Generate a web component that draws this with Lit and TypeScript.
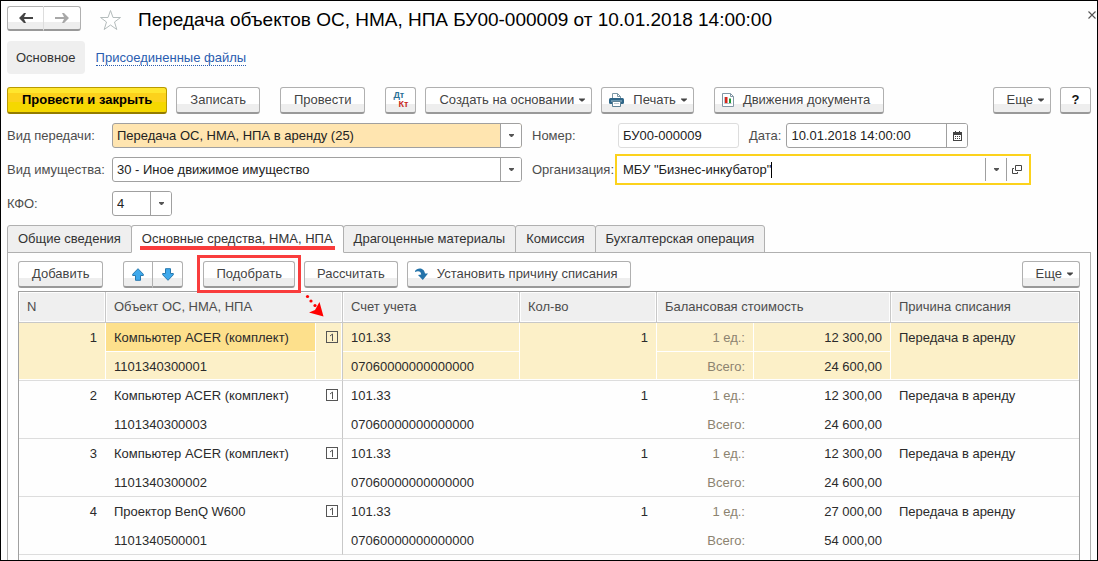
import { LitElement, html, svg, css, nothing } from "lit";
import { customElement, state } from "lit/decorators.js";
import { classMap } from "lit/directives/class-map.js";

interface AssetRow {
  name: string;
  inventory: string;
  account: string;
  subAccount: string;
  qty: number;
  unit: string;
  total: string;
  reason: string;
}

const ROWS: AssetRow[] = [
  ["Компьютер ACER (комплект)", "1101340300001", "12 300,00", "24 600,00"],
  ["Компьютер ACER (комплект)", "1101340300003", "12 300,00", "24 600,00"],
  ["Компьютер ACER (комплект)", "1101340300002", "12 300,00", "24 600,00"],
  ["Проектор BenQ W600", "1101340500001", "27 000,00", "54 000,00"],
].map(([name, inventory, unit, total]) => ({
  name,
  inventory,
  account: "101.33",
  subAccount: "07060000000000000",
  qty: 1,
  unit,
  total,
  reason: "Передача в аренду",
}));

const TABS = [
  "Общие сведения",
  "Основные средства, НМА, НПА",
  "Драгоценные материалы",
  "Комиссия",
  "Бухгалтерская операция",
];

const icon = (w: number, h: number, body: unknown) =>
  html`<svg class="icon" width=${w} height=${h} viewBox="0 0 ${w} ${h}" aria-hidden="true">${body}</svg>`;

const caretDown = () => icon(6, 4, svg`<path d="M0 .5h6v.7L3.600 3.500H2.400L0 1.200z" fill="#444"/>`);
const smallCaret = () => icon(5, 3, svg`<path d="M0 0h5v1L3 3H2L0 1z" fill="#555"/>`);
const arrowLeft = () =>
  icon(14, 10, svg`<path d="M0 5 5 0h2L5 4h9v2H5l2 4H5z" fill="#444"/>`);
const arrowRight = () =>
  icon(14, 10, svg`<path d="M14 5 9 0H7l2 4H0v2h9l-2 4h2z" fill="#a8a8a8"/>`);
const star = () =>
  icon(
    23,
    22,
    svg`<path d="M11.500 1.500 14 8.500h7.500l-6 4.500 2.300 7.500-6.300-4.500-6.300 4.500L7.500 13l-6-4.500H9z" fill="#fff" stroke="#b4bcbc"/>`,
  );
const closeIcon = () =>
  icon(8, 8, svg`<path d="M.5.5l7 7M7.500.5l-7 7" stroke="#555" stroke-width="1.100"/>`);
const printer = () =>
  icon(
    15,
    14,
    svg`<path d="M3.500 5V.5h5l3 3V5" fill="#fff" stroke="#7c98a6"/><path d="M8.500.5v3h3" fill="none" stroke="#7c98a6"/>
      <rect x="0" y="5" width="15" height="6" rx="1.500" fill="#2f6688"/><path d="M2 8h11" stroke="#9fc2d6"/>
      <path d="M3.500 8.500h8v5h-8z" fill="#fff" stroke="#5f8296"/><path d="M5 10.500h5" stroke="#b8c8d0"/>`,
  );
const chartDoc = () =>
  icon(
    12,
    14,
    svg`<path d="M.5.5h8l3 3v10H.5z" fill="#fff" stroke="#8296a4"/><path d="M8.500.5v3h3" fill="none" stroke="#8296a4"/>
      <path d="M2.500 4v6.500h7" fill="none" stroke="#b4c0c8"/><path d="M3 4h2.500v6H3z" fill="#d8261c"/><path d="M7 5.500h2V10H7z" fill="#1f9b3a"/>`,
  );
const blueArrow = () =>
  svg`<path d="M6 .7 11.300 6.200v1.300H8.500v4.800h-5V7.500H.7V6.200z" fill="#3fa9ec" stroke="#2778ae"/>`;
const moveUp = () => icon(12, 13, blueArrow());
const moveDown = () => icon(12, 13, svg`<g transform="rotate(180 6 6.500)">${blueArrow()}</g>`);
const applyIcon = () =>
  icon(
    13,
    13,
    svg`<path d="M0 3C2-.5 9-1 10 5.500h3L7.800 12 3 7l3.200-.6C6 3.500 3.500 2.200 0 4z" fill="#2473aa"/>`,
  );
const calendar = () =>
  icon(
    9,
    10,
    svg`<path d="M0 1h9v9H0z" fill="#444"/><path d="M2 0h1v2H2zM6 0h1v2H6z" fill="#444"/><path d="M1 4h7v5H1z" fill="#fff"/>
      <path d="M2 5.500h5M2 7.500h5" stroke="#444" stroke-dasharray="1 1"/>`,
  );
const openIcon = () =>
  icon(
    10,
    9,
    svg`<path d="M3.500.5h6v5h-6z" fill="none" stroke="#444"/><path d="M2 3.500H.5v5h5V7" fill="none" stroke="#444"/>`,
  );
const subcontoIcon = () =>
  html`<svg class="icon" width="12" height="12" viewBox="0 0 12 12" role="img" aria-label="1">
    <rect x=".5" y=".5" width="11" height="11" fill="none" stroke="#555"></rect>
    <path d="M4 5l2.500-2v7" fill="none" stroke="#555"></path>
  </svg>`;

@customElement("app-root")
export class AppRoot extends LitElement {
  @state() private activeTab = 1;
  @state() private selected = 0;

  static styles = css`
    :host {
      display: block;
      font: 13px/16px "Liberation Sans", Arial, sans-serif;
      color: #333;
    }
    * {
      box-sizing: border-box;
    }
    button,
    input,
    select {
      font: inherit;
      color: inherit;
      margin: 0;
    }
    .icon {
      display: block;
      flex: none;
    }
    .window {
      display: flex;
      flex-direction: column;
      height: 100vh;
      overflow: hidden;
      border: 1px solid #000;
      background: #fefefe;
    }
    .head {
      display: flex;
      align-items: center;
      height: 35px;
      padding: 0 0 0 6px;
    }
    .title {
      flex: 1;
      margin: 2px 0 0 16px;
      font-size: 19px;
      line-height: 24px;
      font-weight: 400;
      color: #000;
      white-space: nowrap;
    }
    .star {
      margin: 2px 0 0 18px;
      padding: 0;
      border: 0;
      background: none;
    }
    .close {
      align-self: flex-start;
      padding: 10px 1px 4px;
      border: 0;
      background: none;
    }
    .split {
      display: flex;
    }
    .split .btn:first-child {
      border-radius: 3px 0 0 3px;
    }
    .split .btn:last-child {
      border-radius: 0 3px 3px 0;
      border-left: 0;
    }
    .history .btn {
      width: 37px;
      height: 25px;
    }
    .history .btn:first-child {
      border-right-color: #ddd;
    }
    .order .btn {
      width: 30px;
    }
    .btn {
      display: flex;
      align-items: center;
      justify-content: center;
      gap: 5px;
      height: 27px;
      padding: 0 13px;
      border: 1px solid #b0b0b0;
      border-bottom: 2px solid #999;
      border-radius: 3px;
      background: linear-gradient(#fff 66%, #eee 66%);
      color: #444;
      white-space: nowrap;
    }
    .btn.primary {
      padding: 0 14px;
      border-color: #b89a00;
      border-bottom-color: #937c00;
      background: linear-gradient(#ffe62e 0 20%, #fcd21c 20% 60%, #f5d800 60%);
      color: #000;
      font-weight: 700;
    }
    .btn.compact {
      padding: 0 12px;
    }
    .btn.menu {
      padding-right: 6px;
    }
    .btn.iconic {
      padding-left: 7px;
    }
    .btn.iconic .icon:first-child {
      margin-right: 4px;
    }
    .btn.square {
      width: 31px;
      padding: 0;
    }
    .btn.help {
      font-weight: 700;
      color: #111;
    }
    .dtkt {
      display: grid;
      width: 15px;
      font-size: 9px;
      line-height: 9px;
      font-weight: 700;
    }
    .dt {
      color: #2b6f96;
      text-align: left;
    }
    .kt {
      color: #c8281e;
      text-align: right;
    }
    .sections {
      display: flex;
      align-items: center;
      gap: 11px;
      padding: 5px 6px 0;
    }
    .section {
      padding: 9px 9px 8px;
      border-radius: 4px;
      background: #efefef;
    }
    .link {
      color: #2a5db0;
      text-decoration: none;
      border-bottom: 1px dotted #2a5db0;
      line-height: 15px;
    }
    .bar {
      display: flex;
      gap: 20px;
    }
    .bar.main {
      padding: 13px 6px 0;
    }
    .group {
      display: flex;
      gap: 9px;
    }
    .group.end {
      margin-left: auto;
    }
    .form {
      display: grid;
      grid-template-columns: 105px minmax(0, 410px) 96px minmax(0, 410px);
      grid-auto-rows: 25px;
      align-items: center;
      row-gap: 9px;
      padding: 9px 6px 9px;
    }
    .form > label,
    .date-label {
      color: #4d4d4d;
      white-space: nowrap;
    }
    .right-label {
      padding-left: 10px;
    }
    .field {
      display: grid;
      grid-template-columns: minmax(0, 1fr) auto;
      height: 25px;
      border: 1px solid #a0a0a0;
      border-radius: 3px;
      background: #fff;
      color: #222;
      overflow: hidden;
    }
    .field select,
    .field input {
      min-width: 0;
      width: 100%;
      height: 23px;
      padding: 0 4px;
      border: 0;
      outline: 0;
      background: none;
      appearance: none;
    }
    .field select {
      grid-area: 1 / 1 / 2 / 3;
    }
    .field.filled {
      background: #ffe5b0;
    }
    .addon {
      grid-area: 1 / 2 / 2 / 3;
      display: flex;
      align-items: center;
      justify-content: center;
      width: 21px;
      height: 23px;
      padding: 0;
      border: 0;
      border-left: 1px solid #a0a0a0;
      background: #fff;
    }
    .addon.passive {
      pointer-events: none;
    }
    .field.short {
      width: 60px;
    }
    .field.readonly {
      width: 121px;
      border-color: #ddd;
    }
    .field.date {
      width: 182px;
    }
    .number-date {
      display: flex;
      align-items: center;
    }
    .date-label {
      margin: 0 5px 0 10px;
    }
    .field.focused {
      display: flex;
      border-color: #fff;
      border-radius: 0;
      overflow: visible;
      box-shadow: 0 0 0 1px #fff, 0 0 0 3px #fcd21c;
    }
    .field.focused input {
      width: auto;
      field-sizing: content;
      padding: 0 0 0 4px;
    }
    .cursor {
      align-self: center;
      width: 1px;
      height: 16px;
      margin-right: auto;
      background: #000;
    }
    .tabs {
      display: flex;
      padding: 0 6px;
    }
    .tab {
      height: 28px;
      margin: 0 0 -1px -1px;
      padding: 0 10px;
      border: 1px solid #b0b0b0;
      border-radius: 3px 3px 0 0;
      background: #efefef;
      white-space: nowrap;
    }
    .tab:first-child {
      margin-left: 0;
    }
    .tab.active {
      position: relative;
      border-bottom-color: #fefefe;
      background: #fefefe;
    }
    .mark-line {
      position: absolute;
      left: 8px;
      right: 8px;
      bottom: 2px;
      height: 4px;
      background: #f93c3c;
    }
    .panel {
      flex: 1;
      display: flex;
      flex-direction: column;
      gap: 3px;
      min-height: 0;
      margin: 0 6px;
      padding: 8px 10px 0;
      border: 1px solid #b0b0b0;
      border-bottom: 0;
    }
    .marked {
      position: relative;
    }
    .mark-box {
      position: absolute;
      inset: -6px -6px -5px;
      border: 3px solid #f93c3c;
      pointer-events: none;
    }
    .mark-arrow {
      position: absolute;
      top: 33px;
      left: 102px;
      pointer-events: none;
    }
    .table-box {
      flex: 1;
      min-height: 0;
      overflow: hidden;
      border: 1px solid #a0a0a0;
      border-bottom: 0;
    }
    table {
      width: 100%;
      border-collapse: separate;
      border-spacing: 0;
      table-layout: fixed;
    }
    .c-n {
      width: 87px;
    }
    .c-name {
      width: 210px;
    }
    .c-sub {
      width: 27px;
    }
    .c-acc {
      width: 177px;
    }
    .c-qty {
      width: 137px;
    }
    .c-kind {
      width: 97px;
    }
    .c-sum {
      width: 137px;
    }
    th {
      height: 31px;
      padding: 0 8px;
      border-right: 1px solid #c8c8c8;
      border-bottom: 1px solid #c8c8c8;
      background: #efefef;
      box-shadow: inset 0 0 0 1px #fefefe;
      color: #4d4d4d;
      font-weight: 400;
      text-align: left;
    }
    th:last-child {
      border-right: 0;
    }
    td {
      height: 29px;
      padding: 0 8px;
      color: #2b2b2b;
      vertical-align: middle;
      white-space: nowrap;
    }
    .edge {
      padding-top: 2px;
      border-bottom: 1px solid #ddd;
    }
    td[rowspan] {
      padding-top: 7px;
      vertical-align: top;
    }
    .num {
      padding-right: 9px;
      text-align: right;
    }
    .muted {
      padding-right: 9px;
      color: #8c8370;
      text-align: right;
    }
    .ruled {
      border-right: 1px solid #c8c8c8;
    }
    td.sub {
      padding: 8px 4px 0 10px;
    }
    .selected td {
      background: #fcf0c8;
      box-shadow: inset -1px -1px #fff;
    }
    .selected td.current {
      background: #fde08c;
    }
  `;

  private renderRow(row: AssetRow, i: number) {
    return html`
      <tbody class=${classMap({ selected: i === this.selected })} @click=${() => (this.selected = i)}>
        <tr>
          <td class="num edge" rowspan="2">${i + 1}</td>
          <td class=${classMap({ current: i === this.selected })}>${row.name}</td>
          <td class="sub edge ruled" rowspan="2">${subcontoIcon()}</td>
          <td>${row.account}</td>
          <td class="num edge" rowspan="2">${row.qty}</td>
          <td class="muted">1 ед.:</td>
          <td class="num">${row.unit}</td>
          <td class="edge" rowspan="2">${row.reason}</td>
        </tr>
        <tr>
          <td class="edge">${row.inventory}</td>
          <td class="edge">${row.subAccount}</td>
          <td class="muted edge">Всего:</td>
          <td class="num edge">${row.total}</td>
        </tr>
      </tbody>
    `;
  }

  render() {
    return html`
      <div class="window">
        <header class="head">
          <div class="split history">
            <button class="btn compact" aria-label="Назад">${arrowLeft()}</button>
            <button class="btn compact" aria-label="Вперед">${arrowRight()}</button>
          </div>
          <button class="star" aria-label="Избранное">${star()}</button>
          <h1 class="title">Передача объектов ОС, НМА, НПА БУ00-000009 от 10.01.2018 14:00:00</h1>
          <button class="close" aria-label="Закрыть">${closeIcon()}</button>
        </header>

        <nav class="sections">
          <span class="section">Основное</span>
          <a class="link" href="#files">Присоединенные файлы</a>
        </nav>

        <div class="bar main">
          <div class="group">
            <button class="btn primary">Провести и закрыть</button>
            <button class="btn">Записать</button>
          </div>
          <button class="btn">Провести</button>
          <div class="group">
            <button class="btn square">
              <span class="dtkt"><span class="dt">Дт</span><span class="kt">Кт</span></span>
            </button>
            <button class="btn menu">Создать на основании ${caretDown()}</button>
            <button class="btn menu iconic">${printer()} Печать ${caretDown()}</button>
          </div>
          <button class="btn iconic">${chartDoc()} Движения документа</button>
          <div class="group end">
            <button class="btn menu">Еще ${caretDown()}</button>
            <button class="btn square help">?</button>
          </div>
        </div>

        <div class="form">
          <label for="kind">Вид передачи:</label>
          <div class="field filled">
            <select id="kind"><option>Передача ОС, НМА, НПА в аренду (25)</option></select>
            <span class="addon passive">${smallCaret()}</span>
          </div>
          <label class="right-label" for="number">Номер:</label>
          <div class="number-date">
            <div class="field readonly"><input id="number" readonly value="БУ00-000009" /></div>
            <label class="date-label" for="date">Дата:</label>
            <div class="field date">
              <input id="date" value="10.01.2018 14:00:00" />
              <button class="addon" aria-label="Календарь">${calendar()}</button>
            </div>
          </div>

          <label for="property">Вид имущества:</label>
          <div class="field">
            <select id="property"><option>30 - Иное движимое имущество</option></select>
            <span class="addon passive">${smallCaret()}</span>
          </div>
          <label class="right-label" for="org">Организация:</label>
          <div class="field focused">
            <input id="org" value='МБУ "Бизнес-инкубатор"' />
            <span class="cursor"></span>
            <button class="addon" aria-label="Выбрать">${smallCaret()}</button>
            <button class="addon" aria-label="Открыть">${openIcon()}</button>
          </div>

          <label for="kfo">КФО:</label>
          <div class="field short">
            <select id="kfo"><option>4</option></select>
            <span class="addon passive">${smallCaret()}</span>
          </div>
        </div>

        <div class="tabs" role="tablist">
          ${TABS.map(
            (name, i) => html`
              <button
                role="tab"
                aria-selected=${i === this.activeTab ? "true" : "false"}
                class=${classMap({ tab: true, active: i === this.activeTab })}
                @click=${() => (this.activeTab = i)}
              >
                ${name}${i === this.activeTab ? html`<span class="mark-line"></span>` : nothing}
              </button>
            `,
          )}
        </div>

        <section class="panel">
          <div class="bar">
            <button class="btn">Добавить</button>
            <div class="split order">
              <button class="btn compact" aria-label="Вверх">${moveUp()}</button>
              <button class="btn compact" aria-label="Вниз">${moveDown()}</button>
            </div>
            <div class="group">
              <div class="marked">
                <button class="btn compact">Подобрать</button>
                <span class="mark-box"></span>
                <svg class="mark-arrow" width="20" height="24" viewBox="0 0 20 24" aria-hidden="true">
                  <g fill="#f00">
                    <circle cx="2.500" cy="2.500" r="1.600"></circle>
                    <circle cx="6" cy="7" r="1.600"></circle>
                    <circle cx="10" cy="11.500" r="1.600"></circle>
                    <path d="M18.500 22.500 4 18.500l6-2.500 4.500-8z"></path>
                  </g>
                </svg>
              </div>
              <button class="btn compact">Рассчитать</button>
              <button class="btn iconic">${applyIcon()} Установить причину списания</button>
            </div>
            <div class="group end">
              <button class="btn menu">Еще ${caretDown()}</button>
            </div>
          </div>

          <div class="table-box">
            <table>
              <colgroup>
                <col class="c-n" />
                <col class="c-name" />
                <col class="c-sub" />
                <col class="c-acc" />
                <col class="c-qty" />
                <col class="c-kind" />
                <col class="c-sum" />
                <col />
              </colgroup>
              <thead>
                <tr>
                  <th>N</th>
                  <th colspan="2">Объект ОС, НМА, НПА</th>
                  <th>Счет учета</th>
                  <th>Кол-во</th>
                  <th colspan="2">Балансовая стоимость</th>
                  <th>Причина списания</th>
                </tr>
              </thead>
              ${ROWS.map((row, i) => this.renderRow(row, i))}
            </table>
          </div>
        </section>
      </div>
    `;
  }
}
